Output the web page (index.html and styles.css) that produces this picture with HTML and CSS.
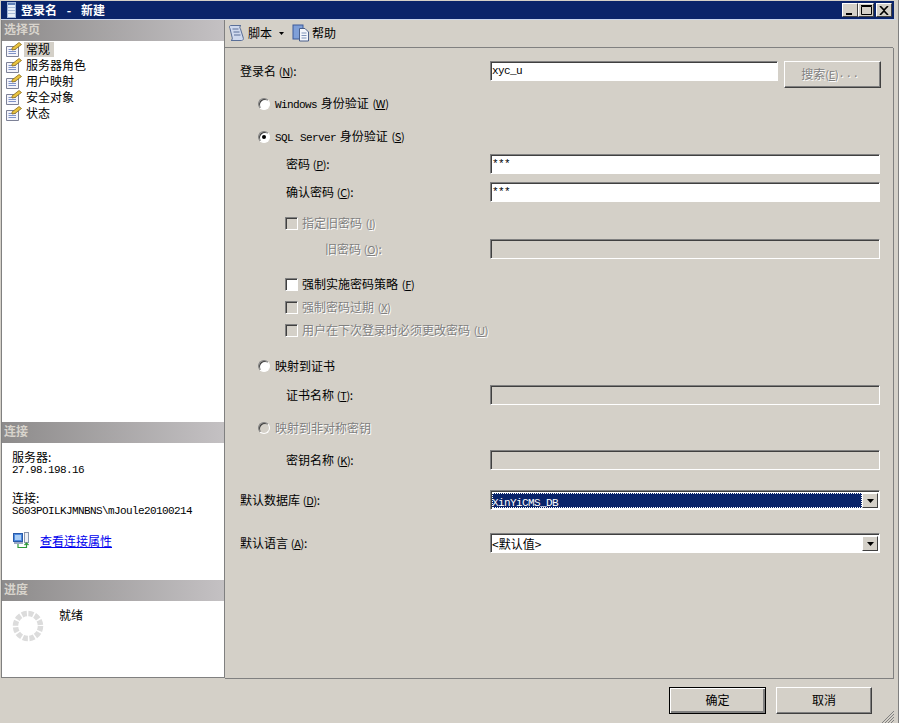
FILE: index.html
```html
<!DOCTYPE html>
<html lang="zh">
<head>
<meta charset="utf-8">
<title>登录名 - 新建</title>
<link rel="stylesheet" href="styles.css">
</head>
<body>
<div class="window">
  <header class="titlebar">
    <svg class="title-icon" width="9" height="16" viewBox="0 0 9 16"><rect x="0.500" y="0.500" width="8" height="15" fill="#e8eef8" stroke="#9fb4d8"/><rect x="1" y="1" width="7" height="2" fill="#5f7fb8"/><rect x="1" y="5" width="7" height="1" fill="#a8bad8"/><rect x="1" y="8" width="7" height="1" fill="#a8bad8"/><rect x="1" y="11" width="7" height="1" fill="#a8bad8"/></svg>
    <span class="title-text">登录名 - 新建</span>
    <div class="title-buttons">
      <button class="cap-btn"><svg width="10" height="9" viewBox="0 0 10 9"><rect x="1" y="7" width="6" height="2" fill="#000"/></svg></button>
      <button class="cap-btn"><svg width="11" height="10" viewBox="0 0 11 10"><path d="M0.500 1.500H10.500V9.500H0.500Z M0 0.500H11" fill="none" stroke="#000"/></svg></button>
      <button class="cap-btn cap-close"><svg width="10" height="9" viewBox="0 0 10 9"><path d="M1 0L5 4L9 0M1 9L5 5L9 9" fill="none" stroke="#000" stroke-width="1.600"/></svg></button>
    </div>
  </header>
  <div class="main">
    <aside class="sidebar">
      <section class="side-pages">
        <h2 class="side-head">选择页</h2>
        <ul class="page-list">
          <li class="page-item active"><svg class="page-icon" viewBox="0 0 16 15"><use href="#page"/></svg><span class="page-label">常规</span></li>
          <li class="page-item"><svg class="page-icon" viewBox="0 0 16 15"><use href="#page"/></svg><span class="page-label">服务器角色</span></li>
          <li class="page-item"><svg class="page-icon" viewBox="0 0 16 15"><use href="#page"/></svg><span class="page-label">用户映射</span></li>
          <li class="page-item"><svg class="page-icon" viewBox="0 0 16 15"><use href="#page"/></svg><span class="page-label">安全对象</span></li>
          <li class="page-item"><svg class="page-icon" viewBox="0 0 16 15"><use href="#page"/></svg><span class="page-label">状态</span></li>
        </ul>
      </section>
      <section class="side-conn">
        <h2 class="side-head">连接</h2>
        <div class="conn-body">
          <div class="conn-line">服务器:</div>
          <div class="conn-line conn-lat lat">27.98.198.16</div>
          <div class="conn-line conn-second">连接:</div>
          <div class="conn-line conn-lat lat">S603POILKJMNBNS\mJoule20100214</div>
          <div class="conn-link-row">
            <svg width="16" height="17" viewBox="0 0 16 17"><rect x="0.500" y="1.500" width="9" height="8" fill="#4d8ae0" stroke="#2a5aa8"/><rect x="2" y="3" width="6" height="5" fill="#a9cdf5"/><rect x="1" y="10" width="9" height="2" fill="#9aa8c4"/><rect x="11.500" y="0.500" width="4" height="10" fill="#eef0f4" stroke="#8a96ae"/><path d="M5 12V15.500H13.500V11.500M11.500 13L13.500 11L15.500 13" fill="none" stroke="#2f9a3a" stroke-width="1.200"/></svg>
            <a class="conn-link" href="#">查看连接属性</a>
          </div>
        </div>
      </section>
      <section class="side-progress">
        <h2 class="side-head">进度</h2>
        <div class="progress-body">
          <svg class="spinner" width="32" height="32" viewBox="0 0 32 32"><circle cx="16" cy="16" r="12.500" fill="none" stroke="#dcdcdc" stroke-width="5.500" stroke-dasharray="5 1.545"/></svg>
          <span class="progress-text">就绪</span>
        </div>
      </section>
    </aside>
    <div class="content">
      <nav class="toolbar">
        <svg width="18" height="18" viewBox="0 0 18 18"><path d="M2.500 1.500H13C11.500 2 11.500 4 12.500 5L15 13C16 15 15 16.500 13.500 16.500H3C4.500 16 4.500 14 4 13L2 4.500C1 3.500 1.500 1.500 2.500 1.500Z" fill="#cfd9ee" stroke="#5a6f98"/><path d="M4.500 5H10.500M5.500 8H11.500M6 11H12.500" stroke="#5a6f98"/></svg>
        <span class="tool-label">脚本</span>
        <svg class="tool-caret" width="5" height="3" viewBox="0 0 5 3"><path d="M0 0H5L2.500 3Z" fill="#000"/></svg>
        <svg class="tool-help" width="18" height="18" viewBox="0 0 18 18"><rect x="1" y="1" width="10" height="14" fill="#7f9fd8" stroke="#3c5a9a"/><path d="M7.500 4.500H13L16.500 8V17H7.500Z" fill="#f4f6fb" stroke="#4a5f8a"/><path d="M9.500 9H14.500M9.500 11.500H14.500M9.500 14H14.500" stroke="#7f93b8"/></svg>
        <span class="tool-label">帮助</span>
      </nav>
      <form class="form-panel">
        <div class="row">
          <label class="label">登录名 <span class="key">(<u>N</u>)</span>:</label>
          <div class="login-field"><div class="input input-white lat">xyc_u</div><button type="button" class="btn btn-search" disabled>搜索 <span class="key">(<u>E</u>)</span><span class="lat">...</span></button></div>
        </div>
        <div class="row gap-11 indent-1"><span class="radio"></span><span class="opt"><span class="lat">Windows</span> 身份验证 <span class="key">(<u>W</u>)</span></span></div>
        <div class="row gap-11 indent-1"><span class="radio radio-on"></span><span class="opt"><span class="lat">SQL Server</span> 身份验证 <span class="key">(<u>S</u>)</span></span></div>
        <div class="row gap-5"><label class="label indent-2">密码 <span class="key">(<u>P</u>)</span>:</label><div class="input input-white lat">***</div></div>
        <div class="row gap-6"><label class="label indent-2">确认密码 <span class="key">(<u>C</u>)</span>:</label><div class="input input-white lat">***</div></div>
        <div class="row gap-9 indent-3 off"><span class="check check-off"></span><span class="opt opt-check">指定旧密码 <span class="key">(<u>I</u>)</span></span></div>
        <div class="row gap-4"><label class="label indent-4 off">旧密码 <span class="key">(<u>O</u>)</span>:</label><div class="input"></div></div>
        <div class="row gap-13 indent-3"><span class="check"></span><span class="opt opt-check">强制实施密码策略 <span class="key">(<u>F</u>)</span></span></div>
        <div class="row gap-1 indent-3 off"><span class="check check-off"></span><span class="opt opt-check">强制密码过期 <span class="key">(<u>X</u>)</span></span></div>
        <div class="row gap-1 indent-3 off"><span class="check check-off"></span><span class="opt opt-check">用户在下次登录时必须更改密码 <span class="key">(<u>U</u>)</span></span></div>
        <div class="row gap-14 indent-1"><span class="radio"></span><span class="opt">映射到证书</span></div>
        <div class="row gap-7"><label class="label indent-2">证书名称 <span class="key">(<u>T</u>)</span>:</label><div class="input"></div></div>
        <div class="row gap-11 indent-1 off"><span class="radio radio-off"></span><span class="opt">映射到非对称密钥</span></div>
        <div class="row gap-10"><label class="label indent-2">密钥名称 <span class="key">(<u>K</u>)</span>:</label><div class="input"></div></div>
        <div class="row gap-18"><label class="label">默认数据库 <span class="key">(<u>D</u>)</span>:</label><div class="combo"><div class="combo-value combo-selected"><span class="lat">XinYiCMS_DB</span></div><span class="combo-btn"><svg width="7" height="4" viewBox="0 0 7 4"><path d="M0 0H7L3.500 4Z" fill="#000"/></svg></span></div></div>
        <div class="row gap-21"><label class="label">默认语言 <span class="key">(<u>A</u>)</span>:</label><div class="combo"><div class="combo-value">&lt;默认值&gt;</div><span class="combo-btn"><svg width="7" height="4" viewBox="0 0 7 4"><path d="M0 0H7L3.500 4Z" fill="#000"/></svg></span></div></div>
      </form>
    </div>
  </div>
  <footer class="footer">
    <button type="button" class="btn btn-ok">确定</button>
    <button type="button" class="btn btn-cancel">取消</button>
    <svg class="grip" width="14" height="13" viewBox="0 0 14 13"><path d="M13 1L1 13M13 4L4 13M13 7L7 13M13 10L10 13" stroke="#808080"/></svg>
  </footer>
</div>
<svg class="defs" width="0" height="0"><defs><g id="page"><path d="M0.500 4.500H12.500V14.500H0.500Z" fill="#f4f4fa" stroke="#7d8196"/><path d="M2.500 7.500H10M2.500 9.500H10M2.500 11.500H10" stroke="#7f93c8"/><path d="M6 6L13 0.500L15.500 2.500L9 7.500L6 8Z" fill="#e9c440" stroke="#8a6a1a" stroke-width="0.800"/></g></defs></svg>
</body>
</html>
```
FILE: styles.css
```css
* { box-sizing: border-box; }
html, body { margin: 0; padding: 0; }
body {
  width: 899px;
  height: 723px;
  overflow: hidden;
  background: #d4d0c8;
  font: 12px/14px "Noto Sans CJK SC", "Liberation Sans", sans-serif;
  color: #000;
}
.defs { position: absolute; }
h2, ul { margin: 0; padding: 0; list-style: none; }
.lat { font-family: "Liberation Mono", "Noto Sans CJK SC", monospace; font-size: 11px; letter-spacing: -0.6px; }
.key { font-size: 11px; letter-spacing: -0.3px; }
.key u { text-underline-offset: 1px; }

.window { width: 899px; height: 723px; display: flex; flex-direction: column; padding: 1px 2px 0 1px; border-right: 1px solid #808080; }

.titlebar { flex: none; height: 18px; width: 893px; display: flex; align-items: center; background: #0a246a; color: #fff; padding-left: 6px; }
.title-icon { flex: none; }
.title-text { margin-left: 5px; font-weight: 700; word-spacing: 7px; }
.title-buttons { margin-left: auto; display: flex; padding-right: 2px; }
.cap-btn { width: 16px; height: 14px; padding: 0; background: #d4d0c8; border: 1px solid; border-color: #fff #404040 #404040 #fff; display: flex; align-items: center; justify-content: center; }
.cap-close { margin-left: 2px; }

.main { flex: none; height: 659px; display: flex; border-top: 1px solid #c8d4ec; }

.sidebar { flex: none; width: 224px; display: flex; flex-direction: column; background: #fff; border: 1px solid #808080; border-top: 0; }
.side-head { height: 21px; padding: 1px 2px; font-size: 12px; line-height: 16px; font-weight: 700; color: #d8d4cc; background: linear-gradient(90deg, #8d8b8b, #c4c1c3); }
.side-pages { flex: none; height: 402px; }
.side-conn { flex: none; height: 158px; }
.side-progress { flex: 1; }

.page-list { padding: 0 0 0 4px; }
.page-item { height: 16px; display: flex; align-items: center; }
.page-icon { width: 16px; height: 15px; flex: none; }
.page-label { margin-left: 2px; padding: 0 4px 1px 2px; line-height: 14px; }
.active .page-label { background: #d4d0c8; }

.conn-body { padding: 7px 10px; }
.conn-line { height: 14px; line-height: 14px; }
.conn-lat { height: 13px; line-height: 12px; }
.conn-second { margin-top: 14px; }
.conn-link-row { display: flex; align-items: center; gap: 11px; margin: 14px 0 0 1px; }
.conn-link { color: #0000ee; }

.progress-body { display: flex; padding: 7px 0 0 10px; }
.spinner { flex: none; margin-top: 2px; }
.progress-text { margin-left: 15px; }

.content { flex: 1; display: flex; flex-direction: column; }
.toolbar { flex: none; height: 28px; display: flex; align-items: center; padding: 0 0 2px 3px; border-bottom: 1px solid #808080; width: 668px; }
.tool-label { margin-left: 2px; }
.tool-caret { margin: 2px 0 0 7px; }
.tool-help { margin-left: 8px; }

.form-panel { flex: none; width: 669px; height: 631px; padding: 12px 12px 0 15px; border-right: 1px solid #808080; border-bottom: 1px solid #808080; }
.row { display: flex; align-items: center; height: 22px; }
.row > .label { width: 250px; flex: none; }
.indent-1 { padding-left: 18px; }
.indent-2 { padding-left: 46px; }
.indent-3 { padding-left: 45px; }
.indent-4 { padding-left: 85px; }
.gap-1 { margin-top: 1px; }
.gap-4 { margin-top: 4px; }
.gap-5 { margin-top: 5px; }
.gap-6 { margin-top: 6px; }
.gap-7 { margin-top: 7px; }
.gap-9 { margin-top: 9px; }
.gap-10 { margin-top: 10px; }
.gap-11 { margin-top: 11px; }
.gap-13 { margin-top: 13px; }
.gap-14 { margin-top: 14px; }
.gap-18 { margin-top: 18px; }
.gap-21 { margin-top: 21px; }

.off { color: #808080; text-shadow: 1px 1px 0 #fff; }

.input { flex: none; width: 390px; height: 20px; padding: 1px 1px; line-height: 16px; border: 1px solid; border-color: #808080 #fff #fff #808080; box-shadow: inset 1px 1px 0 #404040; background: #d4d0c8; }
.input-white { background: #fff; }
.login-field { flex: none; display: flex; gap: 6px; align-items: flex-start; align-self: flex-start; margin-top: 1px; }
.login-field .input { width: 288px; }
.btn { font: inherit; padding: 0 0 2px; background: #d4d0c8; border: 1px solid; border-color: #fff #404040 #404040 #fff; box-shadow: inset -1px -1px 0 #808080; color: #000; display: flex; align-items: center; justify-content: center; }
.btn-search { width: 97px; height: 27px; color: #808080; text-shadow: 1px 1px 0 #fff; padding-right: 4px; }
.btn-search .lat { letter-spacing: 0.5px; }

.radio { flex: none; width: 12px; height: 12px; border-radius: 50%; background: #fff; border: 1px solid; border-color: #808080 #fff #fff #808080; box-shadow: inset 1px 1px 0 #404040; position: relative; }
.radio-off { background: #d4d0c8; }
.radio-on::after { content: ""; position: absolute; left: 3px; top: 3px; width: 4px; height: 4px; border-radius: 50%; background: #000; }
.check { flex: none; width: 13px; height: 13px; background: #fff; border: 1px solid; border-color: #808080 #fff #fff #808080; box-shadow: inset 1px 1px 0 #404040; }
.check-off { background: #d4d0c8; }
.opt { margin-left: 5px; word-spacing: 1px; }
.opt-check { margin-left: 4px; }

.combo { flex: none; width: 390px; height: 20px; display: flex; background: #fff; border: 1px solid; border-color: #808080 #fff #fff #808080; box-shadow: inset 1px 1px 0 #404040; padding: 2px 1px 1px 1px; }
.combo-value { flex: 1; line-height: 15px; }
.combo-selected { background: #0a246a; color: #fff; outline: 1px dotted #fff; outline-offset: -1px; }
.combo-btn { flex: none; width: 16px; background: #d4d0c8; border: 1px solid; border-color: #fff #404040 #404040 #fff; display: flex; align-items: center; justify-content: center; }

.footer { flex: 1; position: relative; display: flex; padding: 9px 0 0 668px; gap: 10px; align-items: flex-start; }
.btn-ok, .btn-cancel { width: 96px; height: 27px; }
.btn-ok { width: 97px; border-color: #000; box-shadow: inset 1px 1px 0 #fff, inset -2px -2px 0 #808080; }
.grip { position: absolute; right: 1px; bottom: 0; }
```
